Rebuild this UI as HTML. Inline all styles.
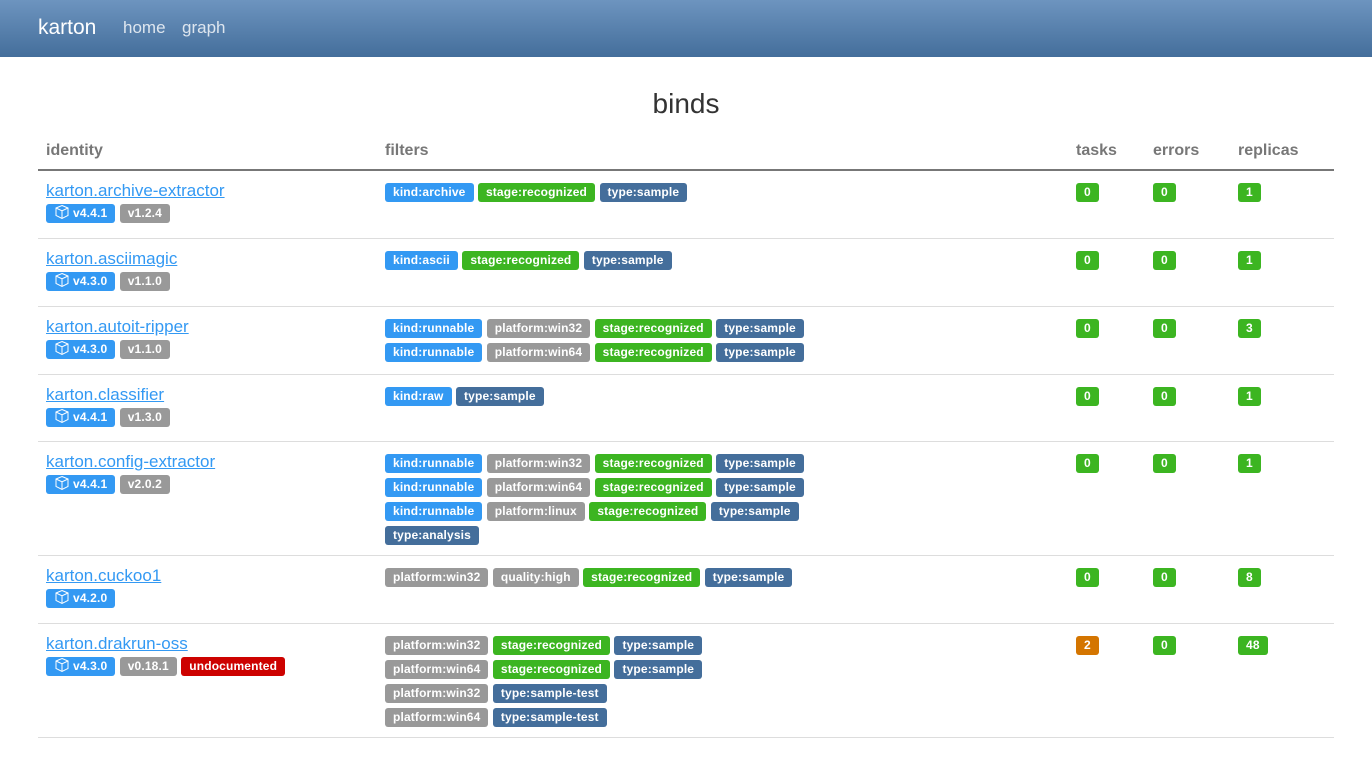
<!DOCTYPE html>
<html><head><meta charset="utf-8"><style>
*{box-sizing:border-box}
body{margin:0;font-family:"Liberation Sans",sans-serif;color:#333;background:#fff}
.nav{height:57px;background:linear-gradient(#6d94bf,#446e9b);position:relative}
.nav .brand{position:absolute;left:38px;top:16px;font-size:21px;color:#fff}
.nav a{position:absolute;top:18px;font-size:17px;color:rgba(255,255,255,.8);text-decoration:none}
h1{margin:0;position:absolute;top:88px;width:100%;text-align:center;font-size:28px;font-weight:normal;color:#333}
table{position:absolute;top:130px;left:38px;width:1296px;border-collapse:collapse}
th{text-align:left;color:#777;font-size:16px;padding:11px 8px 8px;border-bottom:2px solid #777;height:40px}
td{vertical-align:top;padding:9px 8px 5px;border-bottom:1px solid #ddd}
.l{color:#3399f3;font-size:17px;text-decoration:underline;line-height:21px;display:block;height:24px}
.b{display:inline-block;height:19px;line-height:19px;padding:0 8px;font-size:12px;letter-spacing:0.15px;font-weight:bold;color:#fff;border-radius:3px;margin:0 0 5px 0;vertical-align:top;white-space:nowrap}
.f{margin-top:3px}
.i{background:#3399f3}.s{background:#3cb521}.p{background:#446e9b}.g{background:#999}.w{background:#d47500}.d{background:#cd0200}
.v svg{vertical-align:-3px;margin-right:3px}
</style></head><body>
<div class="nav"><span class="brand">karton</span><a style="left:123px">home</a><a style="left:182px">graph</a></div>
<h1>binds</h1>
<table>
<colgroup><col style="width:339px"><col style="width:691px"><col style="width:77px"><col style="width:85px"><col></colgroup>
<tr><th>identity</th><th>filters</th><th>tasks</th><th>errors</th><th>replicas</th></tr>
<tr style="height:68px"><td><span class="l">karton.archive-extractor</span><span class="b i v"><svg width="16" height="16" viewBox="0 0 16 16" fill="none" stroke="#fff" stroke-width="1"><path d="M8 1.5l6 2.5v7.5l-6 3-6-3V4z M2 4l6 2.8 6-2.8 M8 6.8v7.7"/></svg>v4.4.1</span> <span class="b g">v1.2.4</span></td>
<td><div class="f"><span class="b i">kind:archive</span> <span class="b s">stage:recognized</span> <span class="b p">type:sample</span></div></td>
<td><div class="f"><span class="b s">0</span></div></td><td><div class="f"><span class="b s">0</span></div></td><td><div class="f"><span class="b s">1</span></div></td></tr>
<tr style="height:68px"><td><span class="l">karton.asciimagic</span><span class="b i v"><svg width="16" height="16" viewBox="0 0 16 16" fill="none" stroke="#fff" stroke-width="1"><path d="M8 1.5l6 2.5v7.5l-6 3-6-3V4z M2 4l6 2.8 6-2.8 M8 6.8v7.7"/></svg>v4.3.0</span> <span class="b g">v1.1.0</span></td>
<td><div class="f"><span class="b i">kind:ascii</span> <span class="b s">stage:recognized</span> <span class="b p">type:sample</span></div></td>
<td><div class="f"><span class="b s">0</span></div></td><td><div class="f"><span class="b s">0</span></div></td><td><div class="f"><span class="b s">1</span></div></td></tr>
<tr style="height:68px"><td><span class="l">karton.autoit-ripper</span><span class="b i v"><svg width="16" height="16" viewBox="0 0 16 16" fill="none" stroke="#fff" stroke-width="1"><path d="M8 1.5l6 2.5v7.5l-6 3-6-3V4z M2 4l6 2.8 6-2.8 M8 6.8v7.7"/></svg>v4.3.0</span> <span class="b g">v1.1.0</span></td>
<td><div class="f"><span class="b i">kind:runnable</span> <span class="b g">platform:win32</span> <span class="b s">stage:recognized</span> <span class="b p">type:sample</span><br><span class="b i">kind:runnable</span> <span class="b g">platform:win64</span> <span class="b s">stage:recognized</span> <span class="b p">type:sample</span></div></td>
<td><div class="f"><span class="b s">0</span></div></td><td><div class="f"><span class="b s">0</span></div></td><td><div class="f"><span class="b s">3</span></div></td></tr>
<tr style="height:67px"><td><span class="l">karton.classifier</span><span class="b i v"><svg width="16" height="16" viewBox="0 0 16 16" fill="none" stroke="#fff" stroke-width="1"><path d="M8 1.5l6 2.5v7.5l-6 3-6-3V4z M2 4l6 2.8 6-2.8 M8 6.8v7.7"/></svg>v4.4.1</span> <span class="b g">v1.3.0</span></td>
<td><div class="f"><span class="b i">kind:raw</span> <span class="b p">type:sample</span></div></td>
<td><div class="f"><span class="b s">0</span></div></td><td><div class="f"><span class="b s">0</span></div></td><td><div class="f"><span class="b s">1</span></div></td></tr>
<tr style="height:114px"><td><span class="l">karton.config-extractor</span><span class="b i v"><svg width="16" height="16" viewBox="0 0 16 16" fill="none" stroke="#fff" stroke-width="1"><path d="M8 1.5l6 2.5v7.5l-6 3-6-3V4z M2 4l6 2.8 6-2.8 M8 6.8v7.7"/></svg>v4.4.1</span> <span class="b g">v2.0.2</span></td>
<td><div class="f"><span class="b i">kind:runnable</span> <span class="b g">platform:win32</span> <span class="b s">stage:recognized</span> <span class="b p">type:sample</span><br><span class="b i">kind:runnable</span> <span class="b g">platform:win64</span> <span class="b s">stage:recognized</span> <span class="b p">type:sample</span><br><span class="b i">kind:runnable</span> <span class="b g">platform:linux</span> <span class="b s">stage:recognized</span> <span class="b p">type:sample</span><br><span class="b p">type:analysis</span></div></td>
<td><div class="f"><span class="b s">0</span></div></td><td><div class="f"><span class="b s">0</span></div></td><td><div class="f"><span class="b s">1</span></div></td></tr>
<tr style="height:68px"><td><span class="l">karton.cuckoo1</span><span class="b i v"><svg width="16" height="16" viewBox="0 0 16 16" fill="none" stroke="#fff" stroke-width="1"><path d="M8 1.5l6 2.5v7.5l-6 3-6-3V4z M2 4l6 2.8 6-2.8 M8 6.8v7.7"/></svg>v4.2.0</span></td>
<td><div class="f"><span class="b g">platform:win32</span> <span class="b g">quality:high</span> <span class="b s">stage:recognized</span> <span class="b p">type:sample</span></div></td>
<td><div class="f"><span class="b s">0</span></div></td><td><div class="f"><span class="b s">0</span></div></td><td><div class="f"><span class="b s">8</span></div></td></tr>
<tr style="height:114px"><td><span class="l">karton.drakrun-oss</span><span class="b i v"><svg width="16" height="16" viewBox="0 0 16 16" fill="none" stroke="#fff" stroke-width="1"><path d="M8 1.5l6 2.5v7.5l-6 3-6-3V4z M2 4l6 2.8 6-2.8 M8 6.8v7.7"/></svg>v4.3.0</span> <span class="b g">v0.18.1</span> <span class="b d">undocumented</span></td>
<td><div class="f"><span class="b g">platform:win32</span> <span class="b s">stage:recognized</span> <span class="b p">type:sample</span><br><span class="b g">platform:win64</span> <span class="b s">stage:recognized</span> <span class="b p">type:sample</span><br><span class="b g">platform:win32</span> <span class="b p">type:sample-test</span><br><span class="b g">platform:win64</span> <span class="b p">type:sample-test</span></div></td>
<td><div class="f"><span class="b w">2</span></div></td><td><div class="f"><span class="b s">0</span></div></td><td><div class="f"><span class="b s">48</span></div></td></tr>
</table>
</body></html>
